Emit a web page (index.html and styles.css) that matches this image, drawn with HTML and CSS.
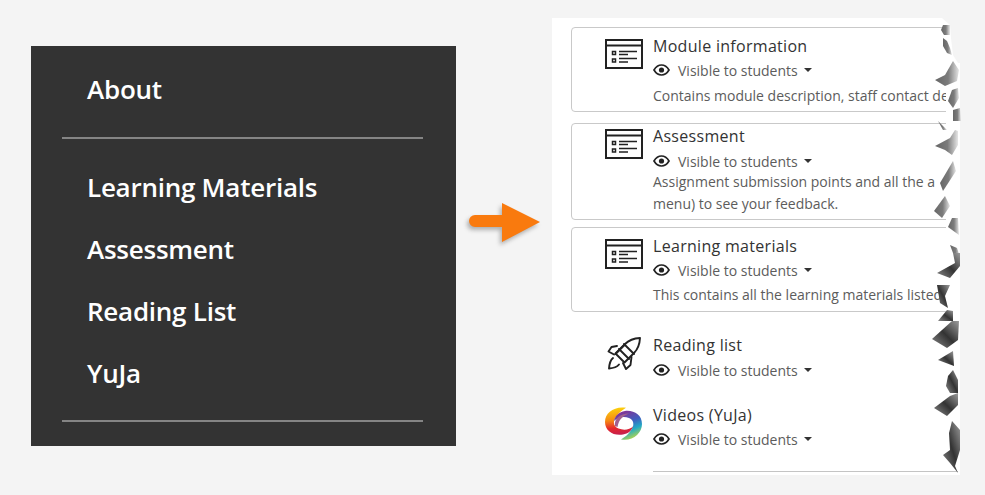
FILE: index.html
```html
<!DOCTYPE html>
<html lang="en">
<head>
<meta charset="utf-8">
<title>Module menu and content</title>
<link rel="stylesheet" href="styles.css">
</head>
<body>
<svg class="sprite" aria-hidden="true">
  <symbol id="i-form" viewBox="0 0 38 30">
    <g fill="none" stroke="#222" stroke-width="2">
      <rect x="1" y="1" width="36" height="28"/>
      <path d="M1 6.500h36"/>
      <path d="M14 12.500h18M14 15.500h9M14 19.500h18M14 23h9" stroke-width="1.600"/>
      <rect x="7.500" y="12.500" width="3" height="3" stroke-width="1.500"/>
      <rect x="7.500" y="20" width="3" height="3" stroke-width="1.500"/>
    </g>
  </symbol>
  <symbol id="i-eye" viewBox="0 0 17 12">
    <path d="M1 6C3 2.600 5.600 1 8.500 1S14 2.600 16 6c-2 3.400-4.600 5-7.500 5S3 9.400 1 6Z" fill="none" stroke="#222" stroke-width="1.700"/>
    <circle cx="8.500" cy="6" r="2.600" fill="#222"/>
  </symbol>
</svg>

<main class="page">
  <nav class="menu">
    <div class="menu-group menu-group-first"><a class="menu-link">About</a></div>
    <div class="menu-group">
      <a class="menu-link">Learning Materials</a>
      <a class="menu-link">Assessment</a>
      <a class="menu-link">Reading List</a>
      <a class="menu-link">YuJa</a>
    </div>
  </nav>

  <svg class="arrow" viewBox="0 0 72 40" aria-hidden="true">
    <path d="M6 12H33V0L71 19 33 39V24H6a6 6 0 0 1 0-12Z" fill="#f97a0e"/>
  </svg>

  <section class="sheet">
    <div class="sheet-clip">
      <article class="item card card-a">
        <svg class="icon-form"><use href="#i-form"/></svg>
        <div class="item-body">
          <h2 class="title">Module information</h2>
          <div class="meta"><svg class="eye"><use href="#i-eye"/></svg><span>Visible to students</span><i class="caret"></i></div>
          <p class="desc">Contains module description, staff contact de</p>
        </div>
      </article>
      <article class="item card card-b">
        <svg class="icon-form"><use href="#i-form"/></svg>
        <div class="item-body">
          <h2 class="title">Assessment</h2>
          <div class="meta"><svg class="eye"><use href="#i-eye"/></svg><span>Visible to students</span><i class="caret"></i></div>
          <p class="desc">Assignment submission points and all the a<br>menu) to see your feedback.</p>
        </div>
      </article>
      <article class="item card card-c">
        <svg class="icon-form"><use href="#i-form"/></svg>
        <div class="item-body">
          <h2 class="title">Learning materials</h2>
          <div class="meta"><svg class="eye"><use href="#i-eye"/></svg><span>Visible to students</span><i class="caret"></i></div>
          <p class="desc">This contains all the learning materials listed</p>
        </div>
      </article>
      <article class="item plain plain-a">
        <svg class="icon-rocket" viewBox="0 0 34 34" aria-hidden="true">
          <g fill="none" stroke="#222" stroke-width="1.900" stroke-linejoin="round" stroke-linecap="round">
            <path d="M33 1c-6 .3-11 2-15 6L8.500 16.500 17.500 25.500 27 16c4-4 5.700-9 6-15Z"/>
            <path d="M10 9 4.500 10 1.500 14.500 7 17.500"/>
            <path d="M24.500 20 23.500 28 19 32 16 26"/>
            <path d="M6 21c-2.500 2-3.600 5-4 10.500 4-.3 8-1.500 10-4"/>
            <path d="M12 12 22 22M17 7 27 17M8.500 17 17 8.500"/>
          </g>
        </svg>
        <div class="item-body">
          <h2 class="title">Reading list</h2>
          <div class="meta"><svg class="eye"><use href="#i-eye"/></svg><span>Visible to students</span><i class="caret"></i></div>
        </div>
      </article>
      <article class="item plain plain-b">
        <svg class="icon-logo" viewBox="0 0 37 33" aria-hidden="true">
          <defs>
            <linearGradient id="warm" x1="0.400" y1="0" x2="0.500" y2="1">
              <stop offset="0" stop-color="#fcd20c"/>
              <stop offset="0.450" stop-color="#f58a14"/>
              <stop offset="0.750" stop-color="#e4262c"/>
              <stop offset="1" stop-color="#c5204f"/>
            </linearGradient>
            <linearGradient id="cool" x1="0.200" y1="0" x2="0.600" y2="1">
              <stop offset="0" stop-color="#8e2b8f"/>
              <stop offset="0.450" stop-color="#3f5fc0"/>
              <stop offset="0.700" stop-color="#22a9c6"/>
              <stop offset="1" stop-color="#b5d84a"/>
            </linearGradient>
          </defs>
          <path d="M21 .8C9 -1 0 6 0 15c0 9 8 14 18 12.500 5-.8 9-4 10.500-8.500-4 4-10 4.500-15 2.500-5-2-6-7-2.500-11.500C13.500 6 17 3.500 21 .8Z" fill="url(#warm)"/>
          <path d="M16 32.500c12 2 21-6.500 21-15.500 0-9-8-14-17-13C14 4.800 10 9 9 14c4-4 10-5 15-3 5.500 2 5.500 8 1.500 13-2.500 3.500-5.500 6-9.500 8.500Z" fill="url(#cool)"/>
          <path d="M10 19C9 11 15 7 24 6.500 18 9 14 12 12.500 20Z" fill="#a0608f"/>
        </svg>
        <div class="item-body">
          <h2 class="title">Videos (YuJa)</h2>
          <div class="meta"><svg class="eye"><use href="#i-eye"/></svg><span>Visible to students</span><i class="caret"></i></div>
        </div>
      </article>
    </div>
    <div class="rule"></div>
    <svg class="tear" viewBox="925 15 60 470" aria-hidden="true">
      <defs>
        <linearGradient id="torn" x1="0" y1="0" x2="1" y2="0">
          <stop offset="0" stop-color="#666"/>
          <stop offset="0.550" stop-color="#7c7c7c"/>
          <stop offset="1" stop-color="#e6e6e6"/>
        </linearGradient>
        <linearGradient id="torn-dark" x1="0" y1="1" x2="1" y2="0">
          <stop offset="0" stop-color="#8a8a8a"/>
          <stop offset="0.500" stop-color="#333"/>
          <stop offset="1" stop-color="#9c9c9c"/>
        </linearGradient>
      </defs>
      <polygon class="tear-bg" points="942,15 985,15 985,60 958,60 953,52 951,35 950,22"/>
      <polygon class="tear-white" points="936,174 960,174 960,190 936,190"/>
      <g class="tear-light">
        <polygon points="941,27 943,22 950,22 950,32 944,32"/>
        <polygon points="943,35 947,38 950,45 952,52 947,50 943,43"/>
        <polygon points="935,77 945,72 953,58 959,67 957,78 945,83"/>
        <polygon points="948,98 952,87 958,85 959,95 953,105"/>
        <polygon points="953,107 960,105 961,118 953,118"/>
        <polygon points="938,118 947,127 943,127"/>
        <polygon points="935,143 950,135 955,127 958,128 958,142 952,152 945,147"/>
        <polygon points="940,180 953,158 956,168 943,188"/>
        <polygon points="934,208 945,193 950,203 942,215"/>
        <polygon points="952,215 958,215 959,232 948,224"/>
        <polygon points="950,242 957,245 960,254 953,250"/>
      </g>
      <g class="tear-dark">
        <polygon points="953,250 960,250 960,263 950,275 937,270 955,260"/>
        <polygon points="937,282 950,282 945,293 948,305 940,300"/>
        <polygon points="938,318 947,307 953,308 953,318"/>
        <polygon points="932,336 952,318 959,318 958,337 947,345"/>
        <polygon points="938,357 953,348 954,363"/>
        <polygon points="948,373 953,367 958,377 958,390 950,390 946,383"/>
        <polygon points="934,405 950,393 958,390 958,402 947,413"/>
        <polygon points="952,418 960,427 960,447 955,463 958,470 950,460 943,452 950,447 949,430"/>
      </g>
    </svg>
  </section>
</main>
</body>
</html>
```

FILE: styles.css
```css
* { box-sizing: border-box; }

html, body {
  margin: 0;
  height: 100%;
  overflow: hidden;
}

body {
  background: #f4f4f4;
  font-family: "Open Sans", "Liberation Sans", sans-serif;
}

.sprite {
  position: absolute;
  width: 0;
  height: 0;
}

.page {
  display: flex;
  align-items: flex-start;
  width: 985px;
  height: 495px;
  padding-left: 31px;
}

/* Left: dark course menu */
.menu {
  flex: none;
  width: 425px;
  height: 400px;
  margin-top: 46px;
  padding: 0 33px 0 31px;
  background: #333;
}

.menu-group {
  display: flex;
  flex-direction: column;
  padding: 17px 0 16px 25px;
  border-bottom: 2px solid #858585;
}

.menu-group-first {
  padding-top: 25px;
  padding-bottom: 30px;
}

.menu-link {
  height: 62px;
  line-height: 62px;
  font-size: 26px;
  font-weight: 560;
  color: #fff;
  letter-spacing: -0.25px;
}

.menu-group-first .menu-link {
  height: 36px;
  line-height: 36px;
}

/* Middle: arrow */
.arrow {
  flex: none;
  width: 72px;
  height: 40px;
  margin: 203px 0 0 13px;
  filter: drop-shadow(-2px 3px 2px rgba(90, 90, 90, 0.45));
}

/* Right: torn content sheet */
.sheet {
  position: relative;
  flex: none;
  width: 408px;
  height: 457px;
  margin: 18px 0 0 11px;
  background: #fff;
}

.sheet-clip {
  width: 394px;
  height: 457px;
  padding: 9px 0 0 19px;
  overflow: hidden;
}

.item {
  display: flex;
  width: 420px;
}

.item-body {
  flex: none;
  width: 340px;
}

.card {
  border: 1px solid #c9c9c9;
  border-radius: 4px;
  padding-left: 33px;
}

.card-a { height: 85px; padding-top: 7px; }
.card-b { height: 97px; margin-top: 11px; padding-top: 1px; }
.card-c { height: 85px; margin-top: 7px; padding-top: 7px; }

.plain { padding-left: 33px; }
.plain-a { margin-top: 22px; }
.plain-b { margin-top: 22px; }

.icon-form {
  flex: none;
  width: 38px;
  height: 30px;
  margin: 4px 10px 0 0;
}

.icon-rocket {
  flex: none;
  width: 34px;
  height: 34px;
  margin: 3px 12px 0 3px;
}

.icon-logo {
  flex: none;
  width: 37px;
  height: 33px;
  margin: 3px 11px 0 1px;
}

.title {
  margin: 0;
  font-size: 16px;
  line-height: 22px;
  font-weight: 500;
  letter-spacing: 0.3px;
  color: #333;
}

.meta {
  display: flex;
  align-items: center;
  height: 24px;
  margin-top: 1px;
  font-size: 14px;
  color: #5c5c5c;
}

.card-b .meta,
.plain-a .meta { margin-top: 2px; }

.eye {
  flex: none;
  width: 17px;
  height: 12px;
  margin-right: 8px;
}

.caret {
  width: 0;
  height: 0;
  margin-left: 6px;
  border: 4px solid transparent;
  border-top-color: #333;
  border-bottom-width: 0;
}

.desc {
  margin: 3px 0 0;
  font-size: 14px;
  line-height: 22px;
  color: #5c5c5c;
  white-space: nowrap;
}

.card-b .desc { margin-top: -2px; }
.card-c .desc { margin-top: 2px; }

.rule {
  position: absolute;
  left: 101px;
  right: 2px;
  bottom: 3px;
  border-top: 1px solid #c4c4c4;
}

/* Torn paper edge lies over the end of the content */
.tear {
  position: absolute;
  top: 0;
  left: 373px;
  width: 60px;
  height: 470px;
}

.tear-bg { fill: #f4f4f4; }
.tear-white { fill: #fff; }

.tear-light,
.tear-dark { filter: blur(0.6px); }

.tear-light polygon { fill: url(#torn); }
.tear-dark polygon { fill: url(#torn-dark); }
```
